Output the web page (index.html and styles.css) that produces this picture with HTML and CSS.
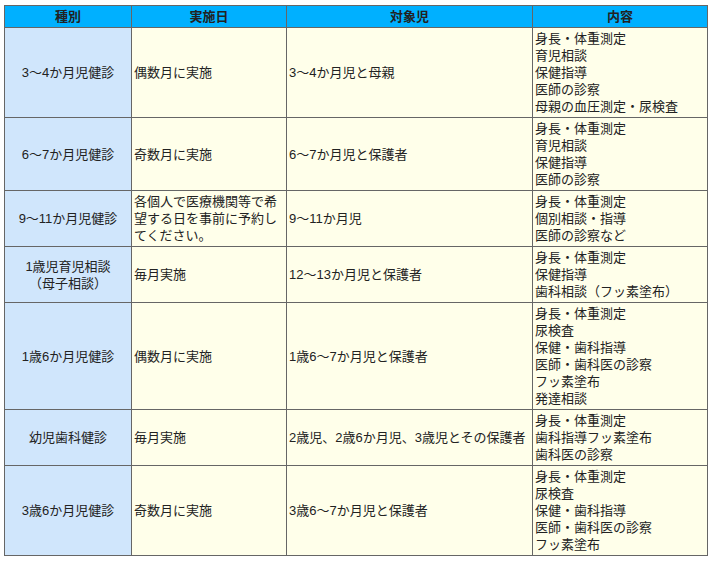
FILE: index.html
```html
<!DOCTYPE html>
<html lang="ja">
<head>
<meta charset="utf-8">
<title>健診一覧</title>
<link rel="stylesheet" href="styles.css">
</head>
<body>
<table class="schedule">
  <colgroup>
    <col class="c-type">
    <col class="c-date">
    <col class="c-target">
    <col class="c-content">
  </colgroup>
  <thead>
    <tr><th>種別</th><th>実施日</th><th>対象児</th><th>内容</th></tr>
  </thead>
  <tbody>
    <tr>
      <td class="type">3～4か月児健診</td>
      <td>偶数月に実施</td>
      <td>3～4か月児と母親</td>
      <td>身長・体重測定<br>育児相談<br>保健指導<br>医師の診察<br>母親の血圧測定・尿検査</td>
    </tr>
    <tr>
      <td class="type">6～7か月児健診</td>
      <td>奇数月に実施</td>
      <td>6～7か月児と保護者</td>
      <td>身長・体重測定<br>育児相談<br>保健指導<br>医師の診察</td>
    </tr>
    <tr>
      <td class="type">9～11か月児健診</td>
      <td>各個人で医療機関等で希望する日を事前に予約してください。</td>
      <td>9～11か月児</td>
      <td>身長・体重測定<br>個別相談・指導<br>医師の診察など</td>
    </tr>
    <tr>
      <td class="type">1歳児育児相談<br>（母子相談）</td>
      <td>毎月実施</td>
      <td>12～13か月児と保護者</td>
      <td>身長・体重測定<br>保健指導<br>歯科相談（フッ素塗布）</td>
    </tr>
    <tr>
      <td class="type">1歳6か月児健診</td>
      <td>偶数月に実施</td>
      <td>1歳6～7か月児と保護者</td>
      <td>身長・体重測定<br>尿検査<br>保健・歯科指導<br>医師・歯科医の診察<br>フッ素塗布<br>発達相談</td>
    </tr>
    <tr>
      <td class="type">幼児歯科健診</td>
      <td>毎月実施</td>
      <td>2歳児、2歳6か月児、3歳児とその保護者</td>
      <td>身長・体重測定<br>歯科指導フッ素塗布<br>歯科医の診察</td>
    </tr>
    <tr>
      <td class="type">3歳6か月児健診</td>
      <td>奇数月に実施</td>
      <td>3歳6～7か月児と保護者</td>
      <td>身長・体重測定<br>尿検査<br>保健・歯科指導<br>医師・歯科医の診察<br>フッ素塗布</td>
    </tr>
  </tbody>
</table>
</body>
</html>
```

FILE: styles.css
```css
html, body {
  margin: 0;
  padding: 0;
  background: #ffffff;
}
body {
  padding: 5px 0 0 4px;
  font-family: "Liberation Sans", "Noto Sans CJK JP", sans-serif;
  font-size: 13px;
  line-height: 17px;
  color: #222222;
}
.schedule {
  border-collapse: collapse;
  table-layout: fixed;
  width: 704px;
}
.c-type { width: 127px; }
.c-date { width: 155px; }
.c-target { width: 246px; }
.c-content { width: 175px; }
.schedule th,
.schedule td {
  border: 1px solid #666666;
  padding: 2px 2px;
  vertical-align: middle;
  text-align: left;
  background: #ffffea;
}
.schedule th {
  background: #00b0ff;
  font-weight: bold;
  text-align: center;
}
.schedule td.type {
  background: #d0e6fc;
  text-align: center;
}
```
